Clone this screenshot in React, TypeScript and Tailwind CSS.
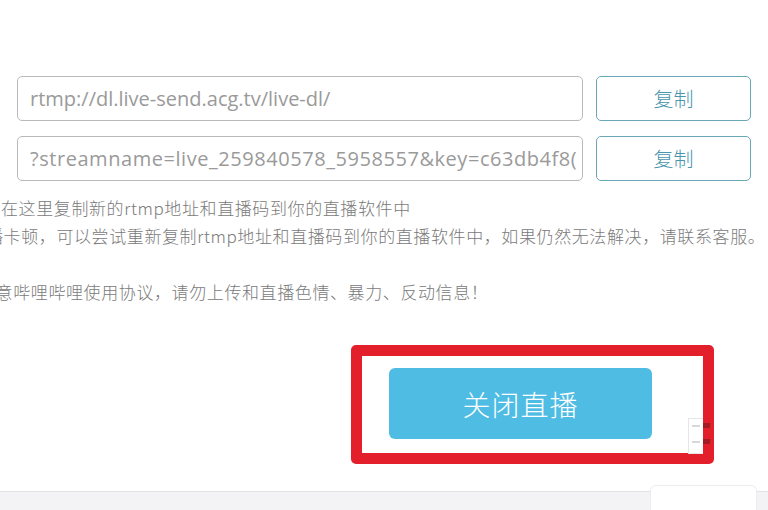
import React from "react";

const cjk = "font-['Noto_Sans_CJK_SC','Noto_Sans',sans-serif]";

function Row({ value, textClass }: { value: string; textClass: string }) {
  return (
    <div className="flex items-center gap-[13px] pl-[17px]">
      <div className="flex h-[45px] w-[566px] items-center overflow-hidden rounded-[5px] border border-[#b9b9b9] bg-white pl-[12px] pr-[6px]">
        <span className={`block min-w-0 flex-1 overflow-hidden whitespace-nowrap font-['Open_Sans',sans-serif] text-[20px] text-[#9a9a9a] ${textClass}`}>
          {value}
        </span>
      </div>
      <button
        className={`flex h-[45px] w-[155px] items-center justify-center rounded-[5px] border border-[#6aa7b6] bg-white text-[20px] font-light text-[#4895ad] ${cjk}`}
      >
        复制
      </button>
    </div>
  );
}

export default function App() {
  return (
    <div className={`relative h-[510px] w-[768px] overflow-hidden bg-white ${cjk}`}>
      <div className="flex flex-col pt-[76px]">
        <Row value="rtmp://dl.live-send.acg.tv/live-dl/" textClass="tracking-normal" />
        <div className="mt-[15px]">
          <Row value="?streamname=live_259840578_5958557&key=c63db4f8(" textClass="tracking-[0.55px]" />
        </div>

        <div className="mt-[13px] whitespace-nowrap text-[17px] font-light leading-[28px] tracking-[0.6px] text-[#7a7a7a]">
          <div className="ml-[1px]">在这里复制新的rtmp地址和直播码到你的直播软件中</div>
          <div className="ml-[-14px]">播卡顿，可以尝试重新复制rtmp地址和直播码到你的直播软件中，如果仍然无法解决，请联系客服。</div>
          <div className="h-[28px]" />
          <div className="ml-[-22px]">注意哔哩哔哩使用协议，请勿上传和直播色情、暴力、反动信息！</div>
        </div>

        <div className="ml-[351px] mt-[39px] h-[119px] w-[363px] rounded-[5px] border-[11px] border-[#e21f2a] pl-[27px] pt-[12px]">
          <button className="flex h-[71px] w-[263px] items-center justify-center rounded-[6px] bg-[#4fbce4] text-[28px] font-light tracking-[1px] text-white">
            关闭直播
          </button>
        </div>

        <div className="mt-[27px] h-[19px] border-t border-[#e2e2e4] bg-[#f3f3f5]" />
      </div>

      {/* watermark fragment */}
      <div className="absolute left-[688px] top-[418px] h-[36px] w-[15px] border-y border-l border-[#e6e6e6]" />
      <div className="absolute left-[692px] top-[425px] h-[2px] w-[8px] bg-[#d8d8d8]" />
      <div className="absolute left-[692px] top-[441px] h-[2px] w-[8px] bg-[#d8d8d8]" />
      <div className="absolute left-[703px] top-[423px] h-[5px] w-[7px] bg-[#a31c23]" />
      <div className="absolute left-[703px] top-[439px] h-[5px] w-[7px] bg-[#a31c23]" />

      {/* white tab at bottom right */}
      <div className="absolute left-[650px] top-[485px] h-[30px] w-[107px] rounded-t-[6px] border border-[#ececee] bg-white" />
    </div>
  );
}
